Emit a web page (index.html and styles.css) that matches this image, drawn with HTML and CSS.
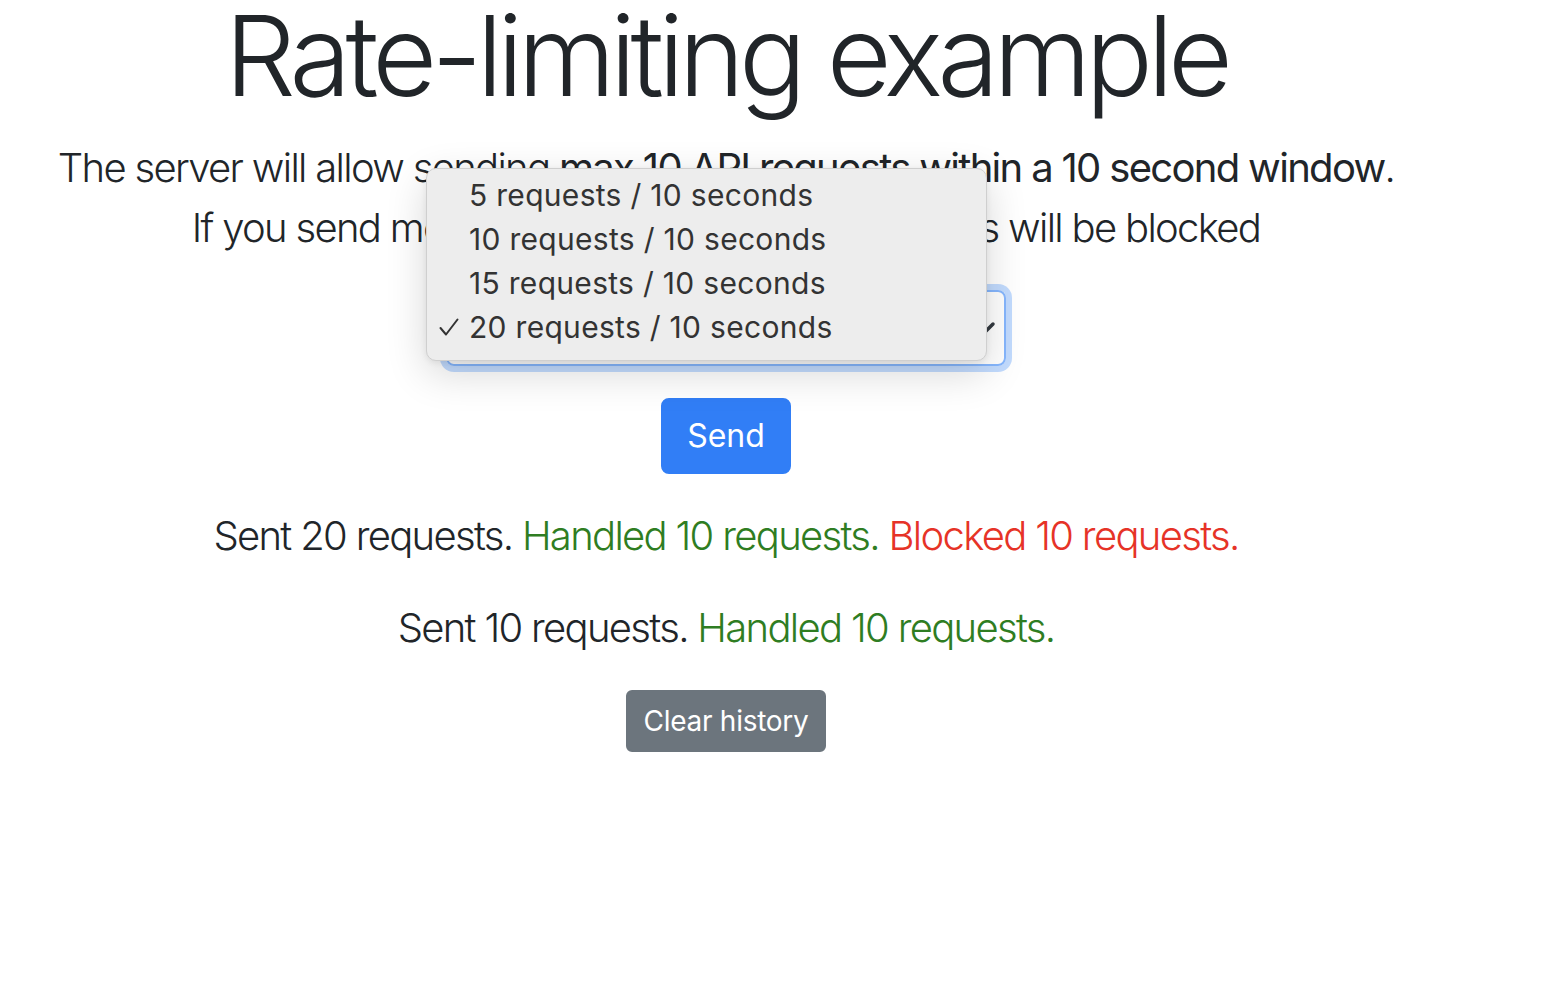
FILE: index.html
```html
<!DOCTYPE html>
<html lang="en">
<head>
<meta charset="utf-8">
<title>Rate-limiting example</title>
<link rel="stylesheet" href="styles.css">
</head>
<body>
<main class="container">
  <h1 class="display">Rate-limiting example</h1>
  <p class="lead">The server will allow sending <strong>max 10 API requests within a 10 second window</strong>.<br>If you send more than that, the surplus requests will be blocked</p>
  <div class="select-wrap">
    <div class="select">
      <span class="select-value">20 requests / 10 seconds</span>
      <svg class="chevron" width="24" height="16" viewBox="0 0 24 16"><polyline points="3,4 12,13 21,4" fill="none" stroke="#343a40" stroke-width="3.5" stroke-linecap="round" stroke-linejoin="round"/></svg>
    </div>
    <div class="menu">
      <div class="menu-item"><span class="check"></span>5 requests / 10 seconds</div>
      <div class="menu-item"><span class="check"></span>10 requests / 10 seconds</div>
      <div class="menu-item"><span class="check"></span>15 requests / 10 seconds</div>
      <div class="menu-item"><span class="check"><svg width="20" height="18" viewBox="0 0 20 18"><polyline points="1.5,10 7,16.5 18.5,1.5" fill="none" stroke="#333333" stroke-width="2" stroke-linecap="round" stroke-linejoin="round"/></svg></span>20 requests / 10 seconds</div>
    </div>
  </div>
  <button class="btn btn-primary">Send</button>
  <p class="lead result">Sent 20 requests. <span class="ok">Handled 10 requests.</span> <span class="bad">Blocked 10 requests.</span></p>
  <p class="lead result">Sent 10 requests. <span class="ok">Handled 10 requests.</span></p>
  <button class="btn btn-secondary btn-sm">Clear history</button>
</main>
</body>
</html>
```

FILE: styles.css
```css
html, body {
  margin: 0;
  padding: 0;
  background: #ffffff;
}
body {
  font-family: Inter, "Noto Sans", "Liberation Sans", sans-serif;
  color: #212529;
  font-size: 32px;
  line-height: 1.5;
}
.container {
  width: 1452px;
  display: flex;
  flex-direction: column;
  align-items: center;
  text-align: center;
}
.display {
  font-size: 112px;
  font-weight: 300;
  line-height: 1.2;
  margin: -12px 0 16px;
  letter-spacing: -0.05em;
  white-space: nowrap;
}
.lead {
  font-size: 40px;
  font-weight: 300;
  line-height: 60px;
  margin: 0 0 32px;
  letter-spacing: -0.042em;
}
.lead strong {
  font-weight: 400;
}
.select-wrap {
  position: relative;
  width: 560px;
  margin-bottom: 32px;
}
.select {
  box-sizing: border-box;
  height: 76px;
  border: 2px solid #86b7fe;
  border-radius: 8px;
  box-shadow: 0 0 0 6px rgba(13, 110, 253, 0.25);
  display: flex;
  align-items: center;
  justify-content: space-between;
  padding: 0 8px 0 24px;
  font-size: 32px;
  text-align: left;
}
.menu {
  position: absolute;
  left: -20px;
  top: -122px;
  width: 561px;
  box-sizing: border-box;
  padding: 4px 0 11px;
  background: #ededed;
  border: 1px solid #cfcfcf;
  border-radius: 10px;
  box-shadow: 0 12px 40px rgba(0, 0, 0, 0.16), 0 2px 6px rgba(0, 0, 0, 0.07);
  text-align: left;
}
.menu-item {
  display: flex;
  align-items: center;
  height: 44px;
  font-size: 30px;
  font-weight: 400;
  color: #333333;
  letter-spacing: 0.01em;
}
.check {
  display: inline-flex;
  align-items: center;
  justify-content: center;
  width: 42px;
  padding-left: 2px;
  box-sizing: border-box;
}
.btn {
  font-family: inherit;
  border: 2px solid transparent;
  border-radius: 8px;
  color: #ffffff;
  cursor: pointer;
}
.btn-primary {
  background: #317ef6;
  border-color: #317ef6;
  font-size: 32px;
  line-height: 48px;
  padding: 12px 24px;
  margin-bottom: 32px;
}
.btn-secondary {
  background: #6c757d;
  border-color: #6c757d;
}
.btn-sm {
  font-size: 28px;
  line-height: 42px;
  padding: 8px 16px;
  border-radius: 6px;
  letter-spacing: -0.01em;
}
.ok {
  color: #2f7d22;
}
.bad {
  color: #e63327;
}
```
